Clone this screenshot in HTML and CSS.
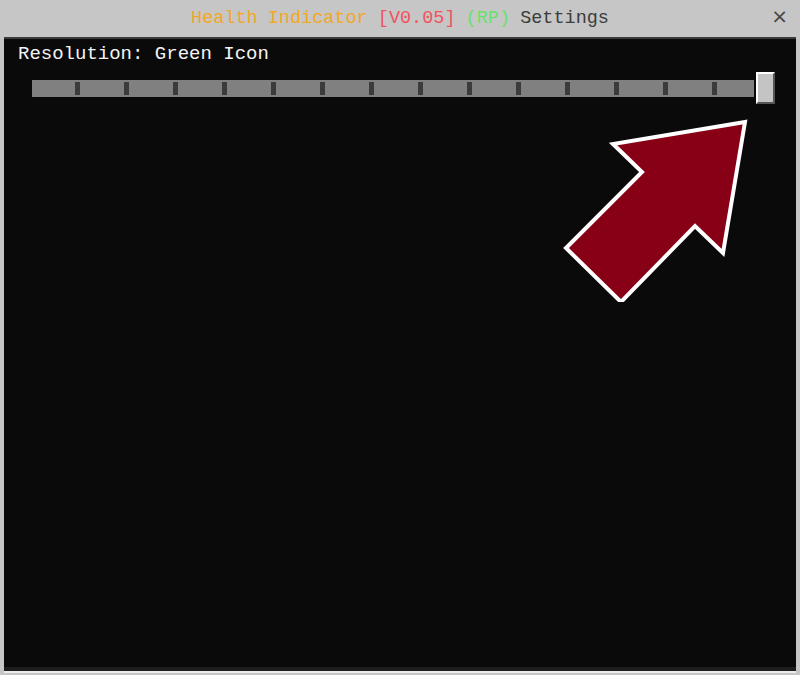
FILE: index.html
```html
<!DOCTYPE html>
<html lang="en">
<head>
  <meta charset="UTF-8">
  <title>Health Indicator Settings</title>
  <link rel="stylesheet" href="styles.css">
</head>
<body>
  <div class="title-bar">
    <h1 class="title">
      <span class="gold">Health Indicator</span>
      <span class="red">[V0.05]</span>
      <span class="green">(RP)</span>
      <span class="dark">Settings</span>
    </h1>
    <span class="close">&times;</span>
  </div>

  <!-- Settings panel -->
  <div class="panel">
    <p class="option-label">Resolution: Green Icon</p>
    <div class="slider">
      <div class="track">
        <span class="tick"></span><span class="tick"></span><span class="tick"></span>
        <span class="tick"></span><span class="tick"></span><span class="tick"></span>
        <span class="tick"></span><span class="tick"></span><span class="tick"></span>
        <span class="tick"></span><span class="tick"></span><span class="tick"></span>
        <span class="tick"></span><span class="tick"></span>
      </div>
      <div class="thumb"></div>
    </div>

    <svg class="pointer" width="200" height="200" viewBox="0 0 200 200">
      <polygon points="183,20 51,42 80,70 4,146 59,200 133,124 161,151"
               fill="#880016" stroke="#fff" stroke-width="4" stroke-linejoin="miter"/>
    </svg>
  </div>
</body>
</html>
```

FILE: styles.css
```css
body {
  margin: 0;
  padding: 0;
  background: #c6c6c6;
  font-family: 'Liberation Mono', 'DejaVu Sans Mono', monospace;
  height: 675px;
  display: flex;
  flex-direction: column;
}

.title-bar {
  height: 37px;
  display: flex;
  align-items: center;
  justify-content: center;
  position: relative;
}

.title {
  margin: 0;
  font-size: 18.5px;
  font-weight: normal;
  word-spacing: -1px;
}

.gold { color: #f2a824; }
.red { color: #f0535e; }
.green { color: #66e26a; }
.dark { color: #3c3c3c; }

.close {
  position: absolute;
  right: 12px;
  top: 4px;
  font-family: 'DejaVu Sans', sans-serif;
  font-size: 20px;
  color: #444;
}

.panel {
  position: relative;
  margin: 0 4px 0 4px;
  height: 632px;
  background: #0a0a0a;
  border-top: 2px solid #3a3a3a;
  border-bottom: 2px solid #ececec;
  box-shadow: inset 0 -4px 0 #1e1e1e;
}

.option-label {
  margin: 4px 0 0 14px;
  color: #f4f4f4;
  font-size: 19px;
}

.slider {
  display: flex;
  align-items: center;
  margin: 7px 0 0 28px;
}

.track {
  width: 722px;
  height: 17px;
  background: #808080;
  display: flex;
  justify-content: space-between;
  align-items: center;
  padding: 0 37px 0 43px;
  box-sizing: border-box;
}

.tick {
  width: 5px;
  height: 13px;
  background: #3b3b3b;
}

.thumb {
  width: 15px;
  height: 28px;
  margin-left: 2px;
  background: #c4c4c4;
  border: 2px solid #fff;
  border-right-color: #555;
  border-bottom-color: #555;
}

.pointer {
  position: absolute;
  left: 558px;
  top: 63px;
}
```
